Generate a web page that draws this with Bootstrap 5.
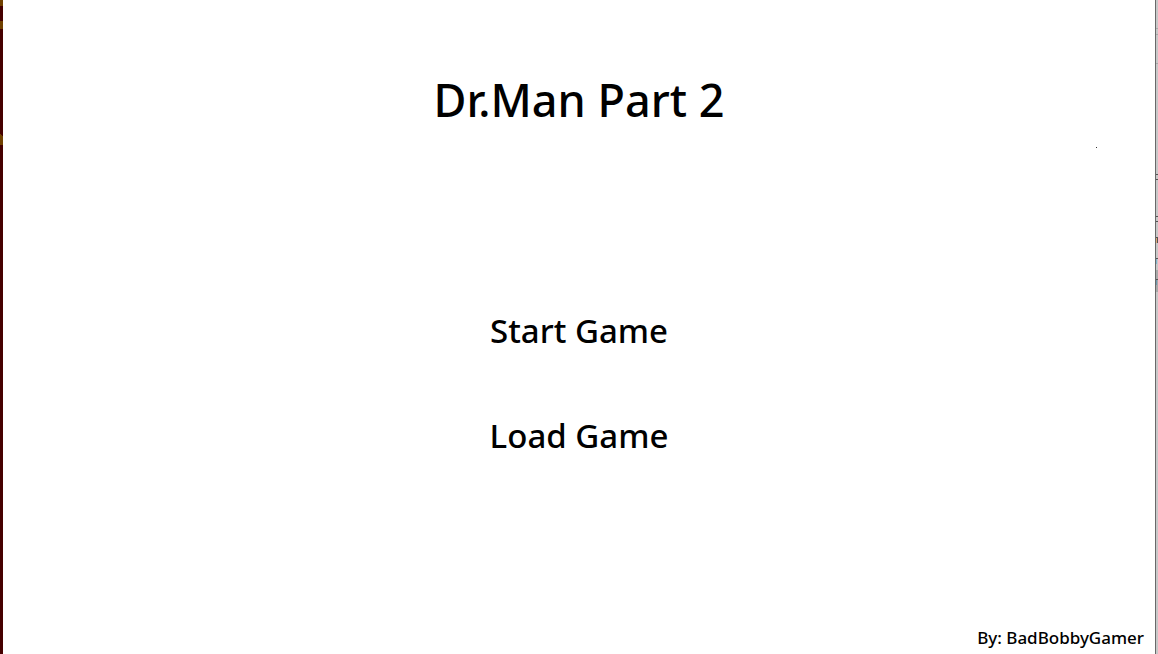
<!DOCTYPE html>
<html lang="en">
<head>
<meta charset="utf-8">
<meta name="viewport" content="width=device-width, initial-scale=1">
<title>Dr.Man Part 2</title>
<link href="https://cdn.jsdelivr.net/npm/bootstrap@5.3.0/dist/css/bootstrap.min.css" rel="stylesheet">
<style>
body { font-family: "Noto Sans", "Open Sans", sans-serif; font-weight: 500; color: #000; background: #fff; }
.edge { width: 3px; }
.edge-left { background: #460000; }
.edge svg { display: block; width: 3px; height: 292px; }
.edge-right { background: #c8c8c8; border-left: 1px solid #696969; }
.title-screen { padding: 70px 11px 4px; }
.game-title { font-size: 45px; line-height: 60px; font-weight: 500; }
.game-menu { margin-top: 177px; gap: 57px; }
.menu-item { font-size: 33px; line-height: 48px; font-weight: 500; color: #000; border: 0; }
.credit { font-size: 17px; line-height: 24px; }
.speck { top: 147px; right: 61px; width: 1px; height: 1px; background: #333; }
</style>
</head>
<body>
<div class="d-flex min-vh-100 position-relative">
  <div class="edge edge-left flex-shrink-0">
    <svg viewBox="0 0 3 292" aria-hidden="true" shape-rendering="crispEdges">
      <path fill="#704000" d="M0 0h3v6H0zM0 21h3v8H0zM0 134h1v1h1v1h1v9H0z"/>
    </svg>
  </div>
  <main class="title-screen flex-grow-1 d-flex flex-column">
    <h1 class="game-title text-center mb-0">Dr.Man Part 2</h1>
    <nav class="game-menu d-flex flex-column align-items-center" aria-label="Game menu">
      <button type="button" class="menu-item btn p-0">Start Game</button>
      <button type="button" class="menu-item btn p-0">Load Game</button>
    </nav>
    <p class="credit mt-auto mb-0 text-end">By: BadBobbyGamer</p>
  </main>
  <div class="edge edge-right flex-shrink-0">
    <svg viewBox="0 0 3 292" aria-hidden="true" shape-rendering="crispEdges">
      <path fill="#a9a9a9" d="M0 28h3v1H0zM0 34h3v1H0zM0 63h3v1H0zM0 270h3v22H0z"/>
      <path fill="#555" d="M0 174h3v1H0zM0 179h3v1H0zM0 216h3v1H0zM0 221h3v1H0zM0 237h2v1H0zM1 238h1v5H1zM0 258h2v1H0zM0 279h2v1H0z"/>
      <path fill="#dca878" d="M0 238h1v5H0z"/>
      <path fill="#83b4ce" d="M0 259h1v5H0z"/>
      <path fill="#6e98ae" d="M0 280h1v5H0z"/>
    </svg>
  </div>
  <span class="speck position-absolute" aria-hidden="true"></span>
</div>
<script src="https://cdn.jsdelivr.net/npm/bootstrap@5.3.0/dist/js/bootstrap.bundle.min.js"></script>
</body>
</html>
